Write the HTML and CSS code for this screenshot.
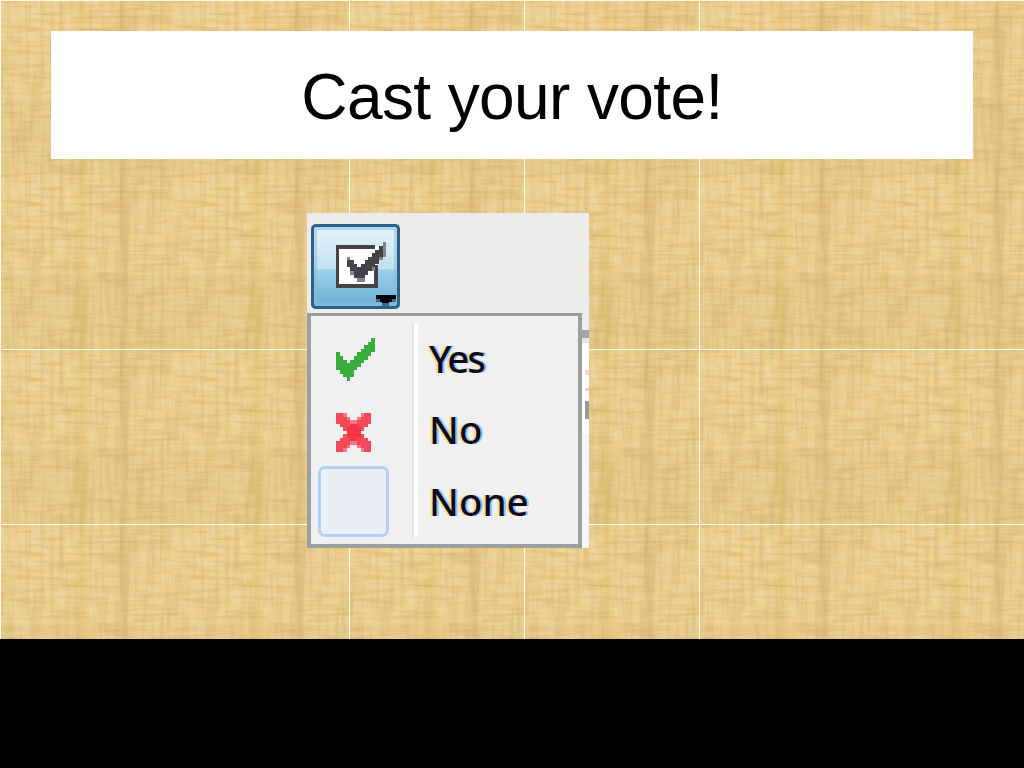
FILE: index.html
```
<!DOCTYPE html>
<html lang="en">

    <head>
        <meta charset="UTF-8">
        <meta name="viewport" content="width=device-width, initial-scale=1.0">
        <title>Cast your vote!</title>
        <link rel="stylesheet" href="styles.css">
    </head>

    <body>
        <main class="slide">
            <!-- woven paper background, repeated every 175px -->
            <svg class="paper" width="1024" height="639" aria-hidden="true">
                <defs>
                    <filter id="across" x="0" y="0" width="1" height="1" color-interpolation-filters="sRGB">
                        <feTurbulence type="fractalNoise" baseFrequency="0.023 0.25" numOctaves="3" seed="4" stitchTiles="stitch" />
                        <feColorMatrix values="0 0 0 0 0.82  0 0 0 0 0.66  0 0 0 0 0.38  1.2 0 0 0 -0.52" />
                    </filter>
                    <filter id="down" x="0" y="0" width="1" height="1" color-interpolation-filters="sRGB">
                        <feTurbulence type="fractalNoise" baseFrequency="0.2 0.017" numOctaves="3" seed="9" stitchTiles="stitch" />
                        <feColorMatrix values="0 0 0 0 0.82  0 0 0 0 0.66  0 0 0 0 0.40  1.1 0 0 0 -0.48" />
                    </filter>
                    <filter id="light" x="0" y="0" width="1" height="1" color-interpolation-filters="sRGB">
                        <feTurbulence type="fractalNoise" baseFrequency="0.07 0.09" numOctaves="4" seed="2" stitchTiles="stitch" />
                        <feColorMatrix values="0 0 0 0 0.95  0 0 0 0 0.85  0 0 0 0 0.67  1.2 0 0 0 -0.25" />
                    </filter>
                    <linearGradient id="bands">
                        <stop offset="0" stop-color="#d9b15f" stop-opacity=".04" />
                        <stop offset=".4" stop-color="#d9b15f" stop-opacity="0" />
                        <stop offset=".47" stop-color="#d9ac50" stop-opacity=".28" />
                        <stop offset=".52" stop-color="#d9ac50" stop-opacity="0" />
                        <stop offset=".66" stop-color="#c99350" stop-opacity=".06" />
                        <stop offset=".71" stop-color="#bd8744" stop-opacity=".22" />
                        <stop offset=".75" stop-color="#c99350" stop-opacity=".04" />
                        <stop offset="1" stop-color="#d9b15f" stop-opacity=".04" />
                    </linearGradient>
                    <pattern id="weave" width="175" height="175" patternUnits="userSpaceOnUse">
                        <rect width="175" height="175" fill="#ecd08c" />
                        <rect width="175" height="175" filter="url(#light)" />
                        <rect width="175" height="175" filter="url(#across)" />
                        <rect width="175" height="175" filter="url(#down)" />
                        <rect width="175" height="175" fill="url(#bands)" />
                        <rect y="100" width="175" height="75" fill="#d5b777" opacity=".18" />
                    </pattern>
                </defs>
                <rect width="1024" height="639" fill="url(#weave)" />
                <path class="seams" d="M.5 0V639M349.5 0V639M524.5 0V639M699.5 0V639M0 .5H1024M0 349.5H1024M0 524.5H1024" />
            </svg>

            <h1 class="title">Cast your vote!</h1>

            <section class="poll">
                <div class="toolbar">
                    <button class="poll-button" aria-label="Poll">
                        <svg width="89" height="86" viewBox="0 0 89 86" shape-rendering="crispEdges">
                            <path fill="#fff" d="M28 24H67V60H28z" />
                            <path fill="#454348" d="M25 21H64V25H28V60H63V41H67V64H25z" />
                            <g transform="translate(35.5 18.3) scale(3.6)">
                                <path fill="#fff" d="M7 2H8V1H9V6H8V7H7z" />
                                <path fill="#858388" d="M10 0H11V4H10zM0 4H1V7H0zM1 7H2V9H1zM3 10H5V11H3zM7 7H8V8H7zM9 4H10V5H9z" />
                                <path fill="#454348" d="M9 1H10V4H9V6H8V7H7V8H6V9H5V10H2V8H1V7H0V5H2V6H3V7H4V6H5V5H6V4H7V3H8V2H9z" />
                            </g>
                            <path fill="#010203" d="M65 71H85V75H81V78H78V79H71V78H69V75H65z" />
                            <path fill="#396f91" d="M65 75H69V78H65zM81 75H85V78H81zM71 79H78V82H71z" />
                        </svg>
                    </button>
                </div>

                <div class="menu-row">
                    <ul class="menu">
                        <li class="item">
                            <span class="icon">
                                <svg width="39" height="43" viewBox="0 0 11 12" preserveAspectRatio="none" shape-rendering="crispEdges">
                                    <path fill="#38ac3d" d="M10 0H11V4H10V5H9V6H8V7H7V8H6V9H5V11H4V12H3V11H2V10H1V9H0V4H1V5H2V6H3V7H4V6H5V5H6V4H7V3H8V2H9V1H10z" />
                                </svg>
                            </span>
                            <span class="label yes">Yes</span>
                        </li>
                        <li class="item">
                            <span class="icon">
                                <svg class="cross" width="35" height="39" viewBox="0 0 10 11" preserveAspectRatio="none" shape-rendering="crispEdges">
                                    <path fill="#f77985" d="M2 0H3V1H4V2H6V1H7V0H8V4H7V7H8V11H7V10H6V9H4V10H3V11H2V7H3V4H2z" />
                                    <path fill="#f4495a" d="M0 0H2V1H3V2H4V3H6V2H7V1H8V0H10V3H9V4H8V5H7V6H8V7H9V8H10V11H8V10H7V9H6V8H4V9H3V10H2V11H0V8H1V7H2V6H3V5H2V4H1V3H0z" />
                                    <path fill="#f23646" d="M4 3H6V4H7V7H6V8H4V7H3V4H4z" />
                                </svg>
                            </span>
                            <span class="label">No</span>
                        </li>
                        <li class="item">
                            <span class="icon selected"></span>
                            <span class="label">None</span>
                        </li>
                    </ul>
                    <div class="edge"></div>
                </div>
            </section>
        </main>
    </body>

</html>
```
FILE: styles.css
```
* {
    box-sizing: border-box;
}

body {
    margin: 0;
    background-color: #000;
    overflow: hidden;
}

.slide {
    display: grid;
    grid-template-columns: 1024px;
    grid-template-rows: 159px 480px;
    justify-items: start;
}

.paper {
    grid-area: 1 / 1 / 3 / 2;
    display: block;
}

.seams {
    stroke: #fffbe6;
    stroke-width: 1px;
}

.title {
    grid-area: 1 / 1;
    z-index: 1;
    width: 922px;
    height: 128px;
    margin: 31px 0 0 51px;
    background-color: #fff;
    color: #000;
    font-family: "Liberation Sans", Arial, sans-serif;
    font-size: 64px;
    font-weight: 400;
    letter-spacing: -0.6px;
    line-height: 132px;
    text-align: center;
}

.poll {
    grid-area: 2 / 1;
    z-index: 1;
    width: 282px;
    height: 335px;
    margin: 54px 0 0 307px;
}

.toolbar {
    height: 100px;
    padding: 11px 4px 0;
    background-color: #ececec;
}

.poll-button {
    display: block;
    width: 89px;
    height: 85px;
    padding: 0;
    border: 0;
    border-radius: 5px;
    background: linear-gradient(#e9f5fc 0, #c2e0f1 53%, #9ad0eb 54%, #69add4 100%);
    box-shadow: inset 0 0 0 3px #2d618a, inset 0 0 0 6px rgba(140, 190, 218, 0.55);
}

.poll-button svg {
    display: block;
}

.menu-row {
    display: flex;
    height: 235px;
}

.menu {
    width: 275px;
    margin: 0;
    padding: 7px 0 0;
    border: solid #9c9f9f;
    border-width: 3px 4px 4px;
    list-style: none;
    background: linear-gradient(90deg, #e2e2e2 2px, #fff 2px) 101px 7px / 6px 214px no-repeat #f0f0f0;
}

.item {
    display: flex;
    align-items: center;
    height: 71.5px;
}

.icon {
    display: flex;
    align-items: center;
    justify-content: center;
    width: 71px;
    height: 71px;
    margin: 0 40px 0 7px;
}

.icon svg {
    margin: 2px 0 0 4px;
}

.icon .cross {
    margin: 4px 0 0 -1px;
}

.selected {
    border: 3px solid #b3d1f8;
    border-radius: 7px;
    background-color: #eaeff5;
}

.label {
    padding-bottom: 2px;
    color: #100a20;
    font-family: "Noto Sans", "Open Sans", sans-serif;
    font-size: 38.5px;
    font-weight: 500;
    line-height: 68px;
    text-shadow: -2px 0 #f0df99, 2px 0 #8fc5f0;
}

.yes {
    letter-spacing: -2.2px;
}

.edge {
    width: 7px;
    background:
        linear-gradient(#999, #999) 3px 88px / 4px 18px no-repeat,
        linear-gradient(#f5d9d9, #f5d9d9) 3px 57px / 4px 5px no-repeat,
        linear-gradient(#f5d0d0, #f5d0d0) 3px 75px / 4px 3px no-repeat,
        linear-gradient(#ececec 0 17px, #a5a5a7 17px 25px, #e4e4e6 25px 30px, #fff 30px 120px, #f2f6fd 120px);
}
```
